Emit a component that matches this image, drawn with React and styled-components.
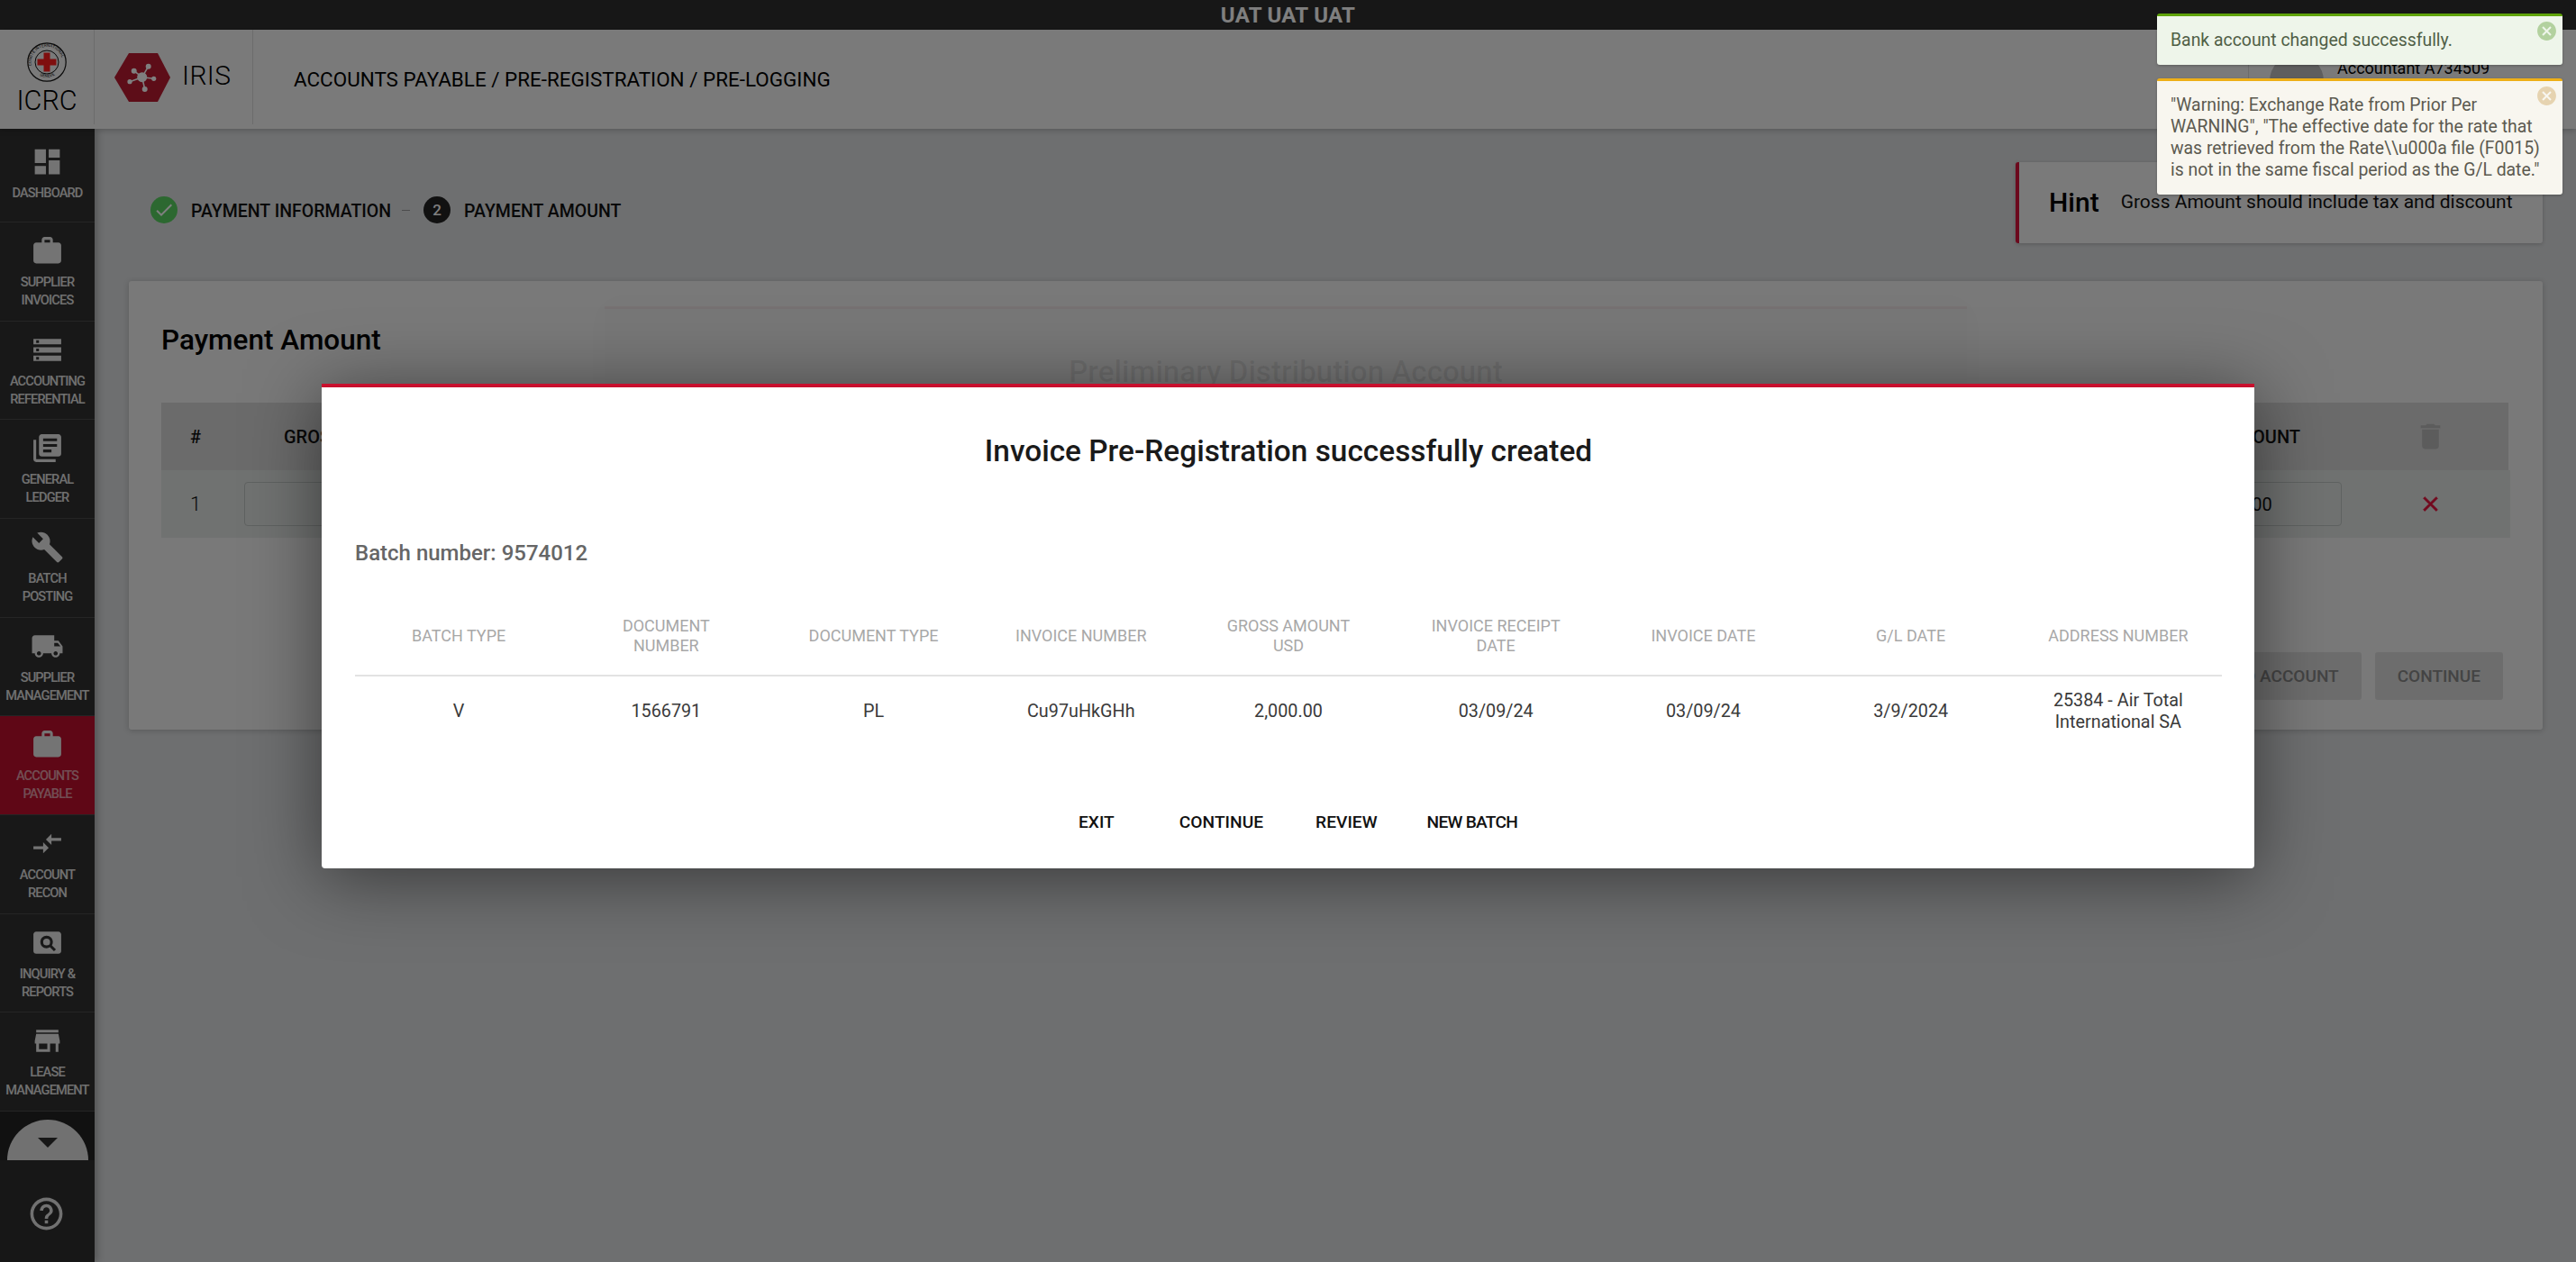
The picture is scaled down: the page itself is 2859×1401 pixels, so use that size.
import React from "react";
import styled, { createGlobalStyle } from "styled-components";
import {
  MdDashboard, MdWork, MdStorage, MdLibraryBooks, MdBuild, MdLocalShipping,
  MdCompareArrows, MdPageview, MdStore, MdHelpOutline, MdDelete, MdClose, MdCheck, MdCancel,
} from "react-icons/md";

const Global = createGlobalStyle`
  html, body { margin: 0; padding: 0; background: #dcdee0; }
  * { box-sizing: border-box; }
  body { font-family: Roboto, "Liberation Sans", sans-serif; color: #111; }
`;

const Page = styled.div`
  position: relative; width: 2859px; height: 1401px; overflow: hidden;
  display: flex; flex-direction: column; background: #dcdee0;
`;
const TopBar = styled.div`
  height: 33px; flex: none; background: #2f2f2f; color: #fff; display: flex;
  align-items: center; justify-content: center; font-size: 24px; font-weight: 700; letter-spacing: .3px;
`;
const Header = styled.header`
  position: relative; z-index: 2; height: 110px; flex: none; background: #f4f4f4; display: flex;
  padding-bottom: 5px; box-shadow: 0 2px 6px rgba(0,0,0,.2);
`;
const LogoBox = styled.div`
  width: 105px; flex: none; border-right: 1px solid #d8d8d8; display: flex; flex-direction: column; align-items: center;
  padding-top: 14px;
`;
const LogoText = styled.div`
  font-size: 30.5px; font-weight: 300; line-height: 34px; margin-top: 4px; color: #000;
`;
const IrisBox = styled.div`
  width: 176px; flex: none; border-right: 1px solid #d8d8d8; display: flex; align-items: flex-start; gap: 13px;
  padding: 26px 0 0 22px;
`;
const IrisText = styled.div`
  font-size: 30px; font-weight: 300; line-height: 50px; color: #000; letter-spacing: .4px;
`;
const Crumbs = styled.div`
  flex: 1; padding: 37px 0 0 45px; font-size: 22.45px; line-height: 36px; color: #000;
`;
const UserBox = styled.div`
  width: 364px; flex: none; border-left: 1px solid #d8d8d8; display: flex; gap: 15px; padding: 0 0 0 23px;
`;
const Avatar = styled.div`
  width: 60px; height: 60px; border-radius: 50%; background: #bcbcbc; margin-top: 27px; flex: none;
`;
const UserInfo = styled.div`
  padding-top: 1.5px; font-size: 18px; line-height: 27px; color: #000;
`;

const Body = styled.div`flex: 1; display: flex; min-height: 0;`;
const Sidebar = styled.nav`
  width: 105px; flex: none; background: #303030; display: flex; flex-direction: column;
  position: relative; z-index: 1; box-shadow: 3px 0 8px rgba(0,0,0,.25);
`;
const NavItem = styled.div`
  height: 109.67px; flex: none; border-bottom: 1px solid #4a4a4a; padding-top: 13px; display: flex; flex-direction: column; align-items: center;
  background: ${p => (p.$active ? "#be0f2d" : "transparent")};
  color: #e8e8e8;
  svg { width: 37px; height: 37px; display: block; flex: none; }
  &:first-child { height: 104px; padding-top: 17.5px; }
`;
const NavLabel = styled.div`
  margin-top: 6px; font-size: 14.6px; font-weight: 500; letter-spacing: -.85px; line-height: 20px; text-align: center; white-space: pre-line; width: 105px;
  color: ${p => (p.$active ? "rgba(255,255,255,.6)" : "#e0e0e0")};
`;
const MoreRow = styled.div`
  height: 54px; flex: none; background: #232323; display: flex; justify-content: center; align-items: flex-end;
`;
const HalfCircle = styled.div`
  width: 90px; height: 45px; background: #e2e2e2; border-radius: 45px 45px 0 0; display: flex; justify-content: center; padding-top: 20px;
`;
const Triangle = styled.div`
  width: 0; height: 0; border-left: 11px solid transparent; border-right: 11px solid transparent; border-top: 11px solid #2f2f2f;
`;
const HelpRow = styled.div`
  flex: 1; background: #2e2e2e; display: flex; justify-content: center; padding-top: 38px; color: #e2e2e2;
  svg { width: 43px; height: 43px; display: block; margin-right: 2px; }
`;

const Main = styled.main`
  flex: 1; min-width: 0; padding: 37px 37px 0 38px; display: flex; flex-direction: column; position: relative;
`;
const TopRow = styled.div`display: flex; justify-content: space-between; align-items: flex-start; height: 90px; flex: none;`;
const Stepper = styled.div`display: flex; align-items: center; margin: 38px 0 0 24px; height: 30px;`;
const StepDot = styled.div`
  width: 30px; height: 30px; border-radius: 50%; display: flex; align-items: center; justify-content: center;
  background: ${p => (p.$done ? "#58d060" : "#222")}; color: #fff; font-size: 17px; font-weight: 500;
  svg { width: 24px; height: 24px; display: block; }
`;
const StepLabel = styled.div`margin-left: 15px; font-size: 19.5px; font-weight: 500; color: #111; position: relative; top: 1px;`;
const StepLine = styled.div`width: 9px; height: 1px; background: #999; margin: 0 15px 0 12px;`;
const Hint = styled.aside`
  width: 585px; height: 90px; background: #f4f4f4; border-left: 4px solid #d9123a; border-radius: 3px; display: flex; align-items: center;
  padding: 0 0 2px 33px; gap: 24px; box-shadow: 0 1px 4px rgba(0,0,0,.2);
`;
const HintTitle = styled.div`font-size: 30px; font-weight: 500; color: #000;`;
const HintText = styled.div`font-size: 21px; color: #111;`;
const Card = styled.section`
  margin-top: 42px; height: 498px; flex: none; background: #f2f2f2; border-radius: 3px; padding: 46px 38px 33px 36px; display: flex; flex-direction: column;
  box-shadow: 0 1px 6px rgba(0,0,0,.2);
`;
const CardTitle = styled.h2`margin: 0; font-size: 31.5px; font-weight: 500; line-height: 40px; color: #000;`;
const THead = styled.div`
  margin-top: 49px; height: 75px; flex: none; background: #d6d6d6; display: flex; align-items: center; font-size: 20px; font-weight: 500; color: #111;
`;
const HeadNum = styled.div`width: 76px; text-align: center; flex: none;`;
const HeadWide = styled.div`flex: 1; padding-left: 60px;`;
const HeadRight = styled.div`padding-right: 44px;`;
const ActionCell = styled.div`
  width: 187px; flex: none; padding-left: ${p => (p.$danger ? "10px" : "14px")}; display: flex; justify-content: center;
  color: ${p => (p.$danger ? "#e5103a" : "#b8b8b8")};
  svg { width: ${p => (p.$danger ? "27px" : "37px")}; height: ${p => (p.$danger ? "27px" : "37px")}; display: block; }
  path:not([fill="none"]) { stroke: ${p => (p.$danger ? "currentColor" : "none")}; stroke-width: .7; }
`;
const TRow = styled.div`
  height: 75px; flex: none; margin-right: -2px; background: #e0e4e2; display: flex; align-items: center; font-size: 22px; font-weight: 300;
`;
const RowNum = styled.div`width: 92px; padding-right: 16px; text-align: center; flex: none;`;
const Field = styled.div`
  height: 49px; border: 1px solid #bfc4c2; border-radius: 4px; display: flex; align-items: center; padding-left: 12px; font-size: 20px; font-weight: 400;
  flex: ${p => (p.$grow ? 1 : "none")}; width: ${p => (p.$grow ? "auto" : "167px")}; margin-right: ${p => (p.$grow ? "20px" : 0)};
`;
const CardActions = styled.div`
  margin-top: 127px; display: flex; justify-content: flex-end; gap: 15px; padding-right: 6px;
`;
const GhostButton = styled.div`
  height: 53px; padding: 0 25px; border-radius: 3px; background: #dadada; color: #888; font-size: 19px; font-weight: 500; display: flex; align-items: center;
`;

const FadedDialog = styled.div`
  position: absolute; top: 197px; left: 566px; width: 1512px; height: 260px; background: rgba(0,0,0,.012);
  border-top: 3px solid rgba(190,15,45,.05); display: flex; justify-content: center; padding-top: 50px;
  font-size: 33.2px; font-weight: 500; color: rgba(0,0,0,.09); box-shadow: 0 0 30px rgba(0,0,0,.02);
`;

const Overlay = styled.div`
  position: absolute; inset: 0; z-index: 10; background: rgba(0,0,0,.5); display: flex; justify-content: center; padding: 426px 0 0 0;
`;
const Dialog = styled.div`
  width: 2145px; height: 538px; background: #fff; border-top: 4px solid #c8102e; border-radius: 0 0 4px 4px; padding: 51px 36px 0 37px;
  box-shadow: 0 10px 80px rgba(0,0,0,.5); display: flex; flex-direction: column;
`;
const DialogTitle = styled.h1`margin: 0; text-align: center; font-size: 33.4px; font-weight: 500; line-height: 40px; color: #1a1a1a;`;
const Batch = styled.div`margin-top: 78px; font-size: 24px; font-weight: 500; line-height: 30px; color: #666;`;
const Table = styled.table`
  margin-top: 34px; width: 100%; table-layout: fixed; border-collapse: collapse; text-align: center;
`;
const Th = styled.th`
  font-size: 18px; font-weight: 400; line-height: 22px; color: #a8a8a8; padding: 0 30px; border-bottom: 2px solid #e3e3e3; height: 87px; vertical-align: middle;
`;
const Td = styled.td`
  font-size: 19.8px; font-weight: 400; line-height: 24px; color: #3a3a3a; height: 78px; padding: 0 30px;
`;
const DialogActions = styled.div`margin-top: 74px; display: flex; justify-content: center; padding-left: 7px;`;
const TextButton = styled.div`
  font-size: 19.2px; font-weight: 500; line-height: 22px; color: #111; text-align: center;
  padding: 0 29px; min-width: ${p => (p.$wide ? "126px" : "0")};
  letter-spacing: ${p => (p.$tight ? "-.75px" : "0")};
  margin-left: ${p => (p.$tight ? "-3px" : "0")};
`;

const Toasts = styled.div`
  position: absolute; top: 15px; right: 15px; z-index: 12; width: 450px; display: flex; flex-direction: column; gap: 15px;
`;
const Toast = styled.div`
  position: relative; border-top: 3px solid ${p => p.$line}; background: ${p => p.$bg}; color: ${p => p.$ink};
  border-radius: 3px; padding: 15px 14px 15px 15px; font-size: 19.4px; line-height: 24px;
  box-shadow: 0 1px 3px rgba(0,0,0,.25);
`;
const ToastClose = styled.div`
  position: absolute; top: 4px; right: 5px; width: 25px; height: 25px; color: ${p => p.$ink};
  svg { width: 25px; height: 25px; display: block; }
`;

const Emblem = () => (
  <svg width="44" height="44" viewBox="0 0 44 44">
    <defs>
      <path id="ringTop" d="M5 26a17.4 17.4 0 1 1 34 0" />
      <path id="ringBot" d="M10 34a17.5 17.5 0 0 0 24 0" />
    </defs>
    <circle cx="22" cy="22" r="21.2" fill="none" stroke="#111" strokeWidth="1.2" />
    <circle cx="22" cy="22" r="13" fill="none" stroke="#111" strokeWidth="1" />
    <text fontSize="4.6" fill="#111" fontFamily="Roboto, sans-serif">
      <textPath href="#ringTop" startOffset="0">COMITE INTERNATIONAL</textPath>
    </text>
    <text fontSize="4.6" fill="#111" fontFamily="Roboto, sans-serif">
      <textPath href="#ringBot" startOffset="5">GENEVE</textPath>
    </text>
    <path d="M18.5 11.5h7v7h7v7h-7v7h-7v-7h-7v-7h7z" fill="#ff1e1e" />
  </svg>
);

const IrisLogo = () => (
  <svg width="62" height="54" viewBox="0 0 62 54" style={{ flex: "none" }}>
    <path d="M0 27L16 0H48L62 27L48 54H16Z" fill="#ba1a30" />
    <g stroke="#fff" strokeWidth="1.6">
      <path d="M30.7 26.7L21.7 19.7M30.7 26.7L37.7 14.7M30.7 26.7L43.7 28.3M30.7 26.7L17 31.7M30.7 26.7L33.7 40" />
    </g>
    <g fill="#fff">
      <circle cx="30.7" cy="26.7" r="5.5" />
      <circle cx="21.7" cy="19.7" r="3" />
      <circle cx="37.7" cy="14.7" r="3" />
      <circle cx="43.7" cy="28.3" r="2.6" />
      <circle cx="17" cy="31.7" r="2.6" />
      <circle cx="33.7" cy="40" r="3" />
    </g>
  </svg>
);

const navItems = [
  [MdDashboard, "DASHBOARD"],
  [MdWork, "SUPPLIER\nINVOICES"],
  [MdStorage, "ACCOUNTING\nREFERENTIAL"],
  [MdLibraryBooks, "GENERAL\nLEDGER"],
  [MdBuild, "BATCH\nPOSTING"],
  [MdLocalShipping, "SUPPLIER\nMANAGEMENT"],
  [MdWork, "ACCOUNTS\nPAYABLE", true],
  [MdCompareArrows, "ACCOUNT\nRECON"],
  [MdPageview, "INQUIRY &\nREPORTS"],
  [MdStore, "LEASE\nMANAGEMENT"],
];

const headers = ["BATCH TYPE", "DOCUMENT NUMBER", "DOCUMENT TYPE", "INVOICE NUMBER", "GROSS AMOUNT USD", "INVOICE RECEIPT DATE", "INVOICE DATE", "G/L DATE", "ADDRESS NUMBER"];
const cells = ["V", "1566791", "PL", "Cu97uHkGHh", "2,000.00", "03/09/24", "03/09/24", "3/9/2024", "25384 - Air Total International SA"];

export default function App() {
  return (
    <Page>
      <Global />
      <TopBar>UAT UAT UAT</TopBar>
      <Header>
        <LogoBox>
          <Emblem />
          <LogoText>ICRC</LogoText>
        </LogoBox>
        <IrisBox>
          <IrisLogo />
          <IrisText>IRIS</IrisText>
        </IrisBox>
        <Crumbs>ACCOUNTS PAYABLE / PRE-REGISTRATION / PRE-LOGGING</Crumbs>
        <UserBox>
          <Avatar />
          <UserInfo>
            <div>&nbsp;</div>
            Accountant A734509
          </UserInfo>
        </UserBox>
      </Header>
      <Body>
        <Sidebar>
          {navItems.map(([Icon, label, active]) => (
            <NavItem key={label} $active={active}>
              <Icon />
              <NavLabel $active={active}>{label}</NavLabel>
            </NavItem>
          ))}
          <MoreRow>
            <HalfCircle><Triangle /></HalfCircle>
          </MoreRow>
          <HelpRow><MdHelpOutline /></HelpRow>
        </Sidebar>
        <Main>
          <TopRow>
            <Stepper>
              <StepDot $done><MdCheck /></StepDot>
              <StepLabel>PAYMENT INFORMATION</StepLabel>
              <StepLine />
              <StepDot>2</StepDot>
              <StepLabel>PAYMENT AMOUNT</StepLabel>
            </Stepper>
            <Hint>
              <HintTitle>Hint</HintTitle>
              <HintText>Gross Amount should include tax and discount</HintText>
            </Hint>
          </TopRow>
          <Card>
            <CardTitle>Payment Amount</CardTitle>
            <THead>
              <HeadNum>#</HeadNum>
              <HeadWide>GROSS AMOUNT</HeadWide>
              <HeadRight>AMOUNT</HeadRight>
              <ActionCell><MdDelete /></ActionCell>
            </THead>
            <TRow>
              <RowNum>1</RowNum>
              <Field $grow />
              <Field>2,000.00</Field>
              <ActionCell $danger><MdClose /></ActionCell>
            </TRow>
            <CardActions>
              <GhostButton>ADD ACCOUNT</GhostButton>
              <GhostButton>CONTINUE</GhostButton>
            </CardActions>
          </Card>
          <FadedDialog>Preliminary Distribution Account</FadedDialog>
        </Main>
      </Body>
      <Overlay>
        <Dialog>
          <DialogTitle>Invoice Pre-Registration successfully created</DialogTitle>
          <Batch>Batch number: 9574012</Batch>
          <Table>
            <thead>
              <tr>{headers.map(h => <Th key={h}>{h}</Th>)}</tr>
            </thead>
            <tbody>
              <tr>{cells.map((c, i) => <Td key={i}>{c}</Td>)}</tr>
            </tbody>
          </Table>
          <DialogActions>
            <TextButton $wide>EXIT</TextButton>
            <TextButton>CONTINUE</TextButton>
            <TextButton>REVIEW</TextButton>
            <TextButton $tight>NEW BATCH</TextButton>
          </DialogActions>
        </Dialog>
      </Overlay>
      <Toasts>
        <Toast $line="#5fa30a" $bg="#eef5ea" $ink="#505f46">
          Bank account changed successfully.
          <ToastClose $ink="#b3d19f"><MdCancel /></ToastClose>
        </Toast>
        <Toast $line="#eeaf17" $bg="#f8f6ef" $ink="#5c5a50">
          "Warning: Exchange Rate from Prior Per WARNING", "The effective date for the rate that was retrieved from the Rate\\u000a file (F0015) is not in the same fiscal period as the G/L date."
          <ToastClose $ink="#e6d3b0"><MdCancel /></ToastClose>
        </Toast>
      </Toasts>
    </Page>
  );
}
